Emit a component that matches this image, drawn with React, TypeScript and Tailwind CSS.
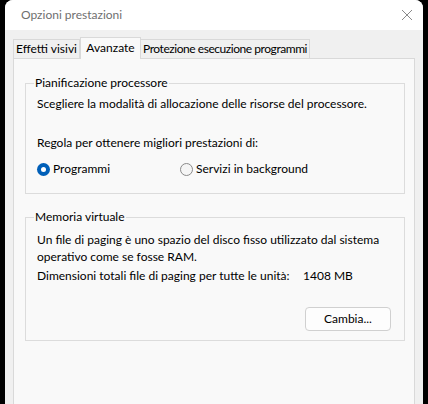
export default function App() {
  return (
    <div className="h-[404px] w-[428px] overflow-hidden bg-black px-[5px] font-['Lato',sans-serif] text-[12px] leading-[16px] text-black">
      <div className="flex h-[420px] flex-col overflow-hidden rounded-t-[8px] bg-[#f0f0f0]">
        {/* Title bar */}
        <div className="flex h-[30px] shrink-0 items-center justify-between bg-white pl-[16px] pr-[9px]">
          <span className="text-[#6f6f6f]">Opzioni prestazioni</span>
          <svg width="12" height="12" viewBox="0 0 12 12" className="mr-[1px]">
            <path d="M1 1L11 11M11 1L1 11" stroke="#8a8a8a" strokeWidth="1" />
          </svg>
        </div>

        <div className="flex flex-1 flex-col px-[8px] pt-[7px]">
          {/* Tabs */}
          <div className="flex h-[21px] items-end whitespace-nowrap">
            <div className="flex h-[19px] w-[67px] shrink-0 items-center justify-center border border-b-0 border-[#d9d9d9] bg-[#f0f0f0]">
              Effetti visivi
            </div>
            <div className="relative z-10 -mb-px flex h-[22px] w-[61px] shrink-0 items-center justify-center border border-b-0 border-[#d9d9d9] bg-[#f9f9f9] pb-px">
              Avanzate
            </div>
            <div className="flex h-[19px] w-[169px] shrink-0 items-center justify-center overflow-hidden border border-b-0 border-l-0 border-[#d9d9d9] bg-[#f0f0f0] tracking-[-0.45px]">
              Protezione esecuzione programmi
            </div>
          </div>

          {/* Panel */}
          <div className="flex flex-1 flex-col border border-[#d9d9d9] bg-[#f9f9f9] pl-[11px] pr-[9px] pt-[16px]">
            <fieldset className="border border-[#dcdcdc] px-[11px] pb-[16px]">
              <legend className="-ml-[3px] px-[1px]">Pianificazione processore</legend>
              <p className="mt-[5px]">Scegliere la modalità di allocazione delle risorse del processore.</p>
              <p className="mt-[23px]">Regola per ottenere migliori prestazioni di:</p>
              <div className="mt-[10px] flex items-center">
                <label className="flex w-[143px] items-center gap-[3px]">
                  <span className="flex h-[13px] w-[13px] items-center justify-center rounded-full bg-[#005fb8]">
                    <span className="h-[5px] w-[5px] rounded-full bg-white" />
                  </span>
                  Programmi
                </label>
                <label className="flex items-center gap-[3px]">
                  <span className="h-[13px] w-[13px] rounded-full border border-[#8a8a8a] bg-[#f5f5f5]" />
                  Servizi in background
                </label>
              </div>
            </fieldset>

            <fieldset className="mt-[15px] border border-[#dcdcdc] pb-[9px] pl-[11px] pr-[13px]">
              <legend className="-ml-[3px] px-[1px]">Memoria virtuale</legend>
              <p className="mt-[6px] leading-[17px]">
                Un file di paging è uno spazio del disco fisso utilizzato dal sistema operativo come se fosse RAM.
              </p>
              <div className="mt-[3px] flex">
                <span className="w-[266px]">Dimensioni totali file di paging per tutte le unità:</span>
                <span>1408 MB</span>
              </div>
              <div className="mt-[23px] flex justify-end">
                <button className="h-[24px] w-[86px] rounded-[4px] border border-[#d0d0d0] bg-[#fdfdfd] text-center">
                  Cambia...
                </button>
              </div>
            </fieldset>
          </div>
        </div>
      </div>
    </div>
  )
}
